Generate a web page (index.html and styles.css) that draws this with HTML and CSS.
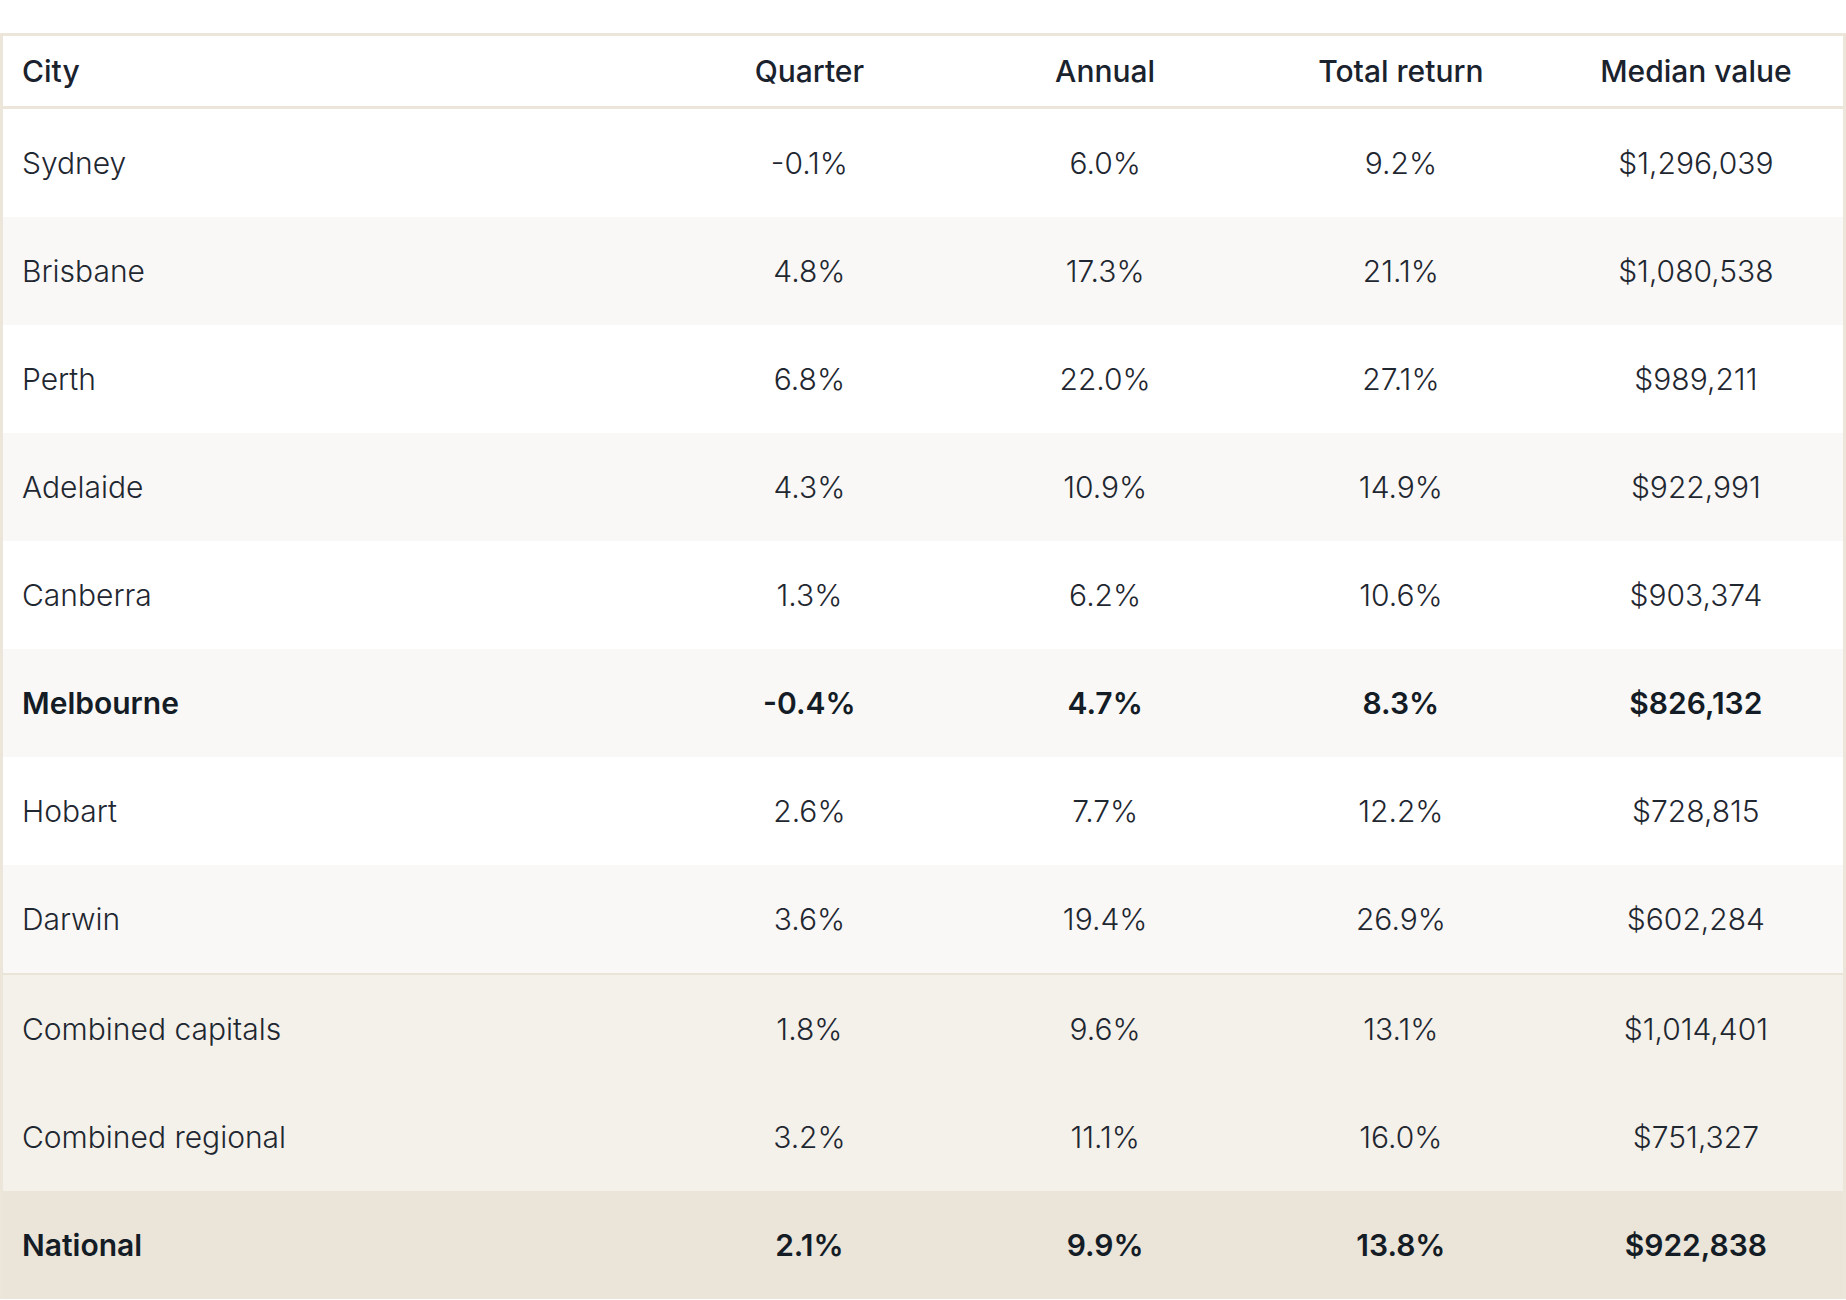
FILE: index.html
```html
<!DOCTYPE html>
<html lang="en">
<head>
<meta charset="utf-8">
<title>City property values</title>
<link rel="stylesheet" href="styles.css">
</head>
<body>
<div class="page">
  <table class="data">
    <colgroup>
      <col class="c-city">
      <col class="c-num">
      <col class="c-num">
      <col class="c-num">
      <col class="c-num">
    </colgroup>
    <thead>
      <tr>
        <th class="city">City</th>
        <th>Quarter</th>
        <th>Annual</th>
        <th>Total return</th>
        <th>Median value</th>
      </tr>
    </thead>
    <tbody>
      <tr><td class="city">Sydney</td><td>-0.1%</td><td>6.0%</td><td>9.2%</td><td>$1,296,039</td></tr>
      <tr class="alt"><td class="city">Brisbane</td><td>4.8%</td><td>17.3%</td><td>21.1%</td><td>$1,080,538</td></tr>
      <tr><td class="city">Perth</td><td>6.8%</td><td>22.0%</td><td>27.1%</td><td>$989,211</td></tr>
      <tr class="alt"><td class="city">Adelaide</td><td>4.3%</td><td>10.9%</td><td>14.9%</td><td>$922,991</td></tr>
      <tr><td class="city">Canberra</td><td>1.3%</td><td>6.2%</td><td>10.6%</td><td>$903,374</td></tr>
      <tr class="alt strong"><td class="city">Melbourne</td><td>-0.4%</td><td>4.7%</td><td>8.3%</td><td>$826,132</td></tr>
      <tr><td class="city">Hobart</td><td>2.6%</td><td>7.7%</td><td>12.2%</td><td>$728,815</td></tr>
      <tr class="alt"><td class="city">Darwin</td><td>3.6%</td><td>19.4%</td><td>26.9%</td><td>$602,284</td></tr>
      <tr class="combined first"><td class="city">Combined capitals</td><td>1.8%</td><td>9.6%</td><td>13.1%</td><td>$1,014,401</td></tr>
      <tr class="combined"><td class="city">Combined regional</td><td>3.2%</td><td>11.1%</td><td>16.0%</td><td>$751,327</td></tr>
      <tr class="national strong"><td class="city">National</td><td>2.1%</td><td>9.9%</td><td>13.8%</td><td>$922,838</td></tr>
    </tbody>
  </table>
</div>
</body>
</html>
```

FILE: styles.css
```css
html, body {
  margin: 0;
  padding: 0;
  background: #ffffff;
}

.page {
  padding-top: 33px;
  font-family: Inter, "Noto Sans", "Liberation Sans", sans-serif;
  color: #17202b;
}

.data {
  width: 100%;
  border-collapse: collapse;
  table-layout: fixed;
  border: 3px solid #ece5da;
  border-bottom: none;
}

.c-city { width: 660px; }

.data th,
.data td {
  text-align: center;
  padding: 0;
  font-size: 30px;
}

.data th.city,
.data td.city {
  text-align: left;
  padding-left: 19px;
}

.data thead th {
  height: 70px;
  font-weight: 500;
  color: #1a222d;
  border-bottom: 3px solid #ece5da;
}

.data tbody td {
  height: 108px;
  font-weight: 300;
  color: #1f2731;
}

.data tr.alt td {
  background: #f9f8f6;
}

.data tr.strong td {
  font-weight: 600;
  color: #141c26;
}

.data tr.combined td {
  background: #f4f1ea;
}

.data tr.combined.first td {
  border-top: 2px solid #ebe4d9;
}

.data tr.national td {
  background: #ebe4d9;
}
```
